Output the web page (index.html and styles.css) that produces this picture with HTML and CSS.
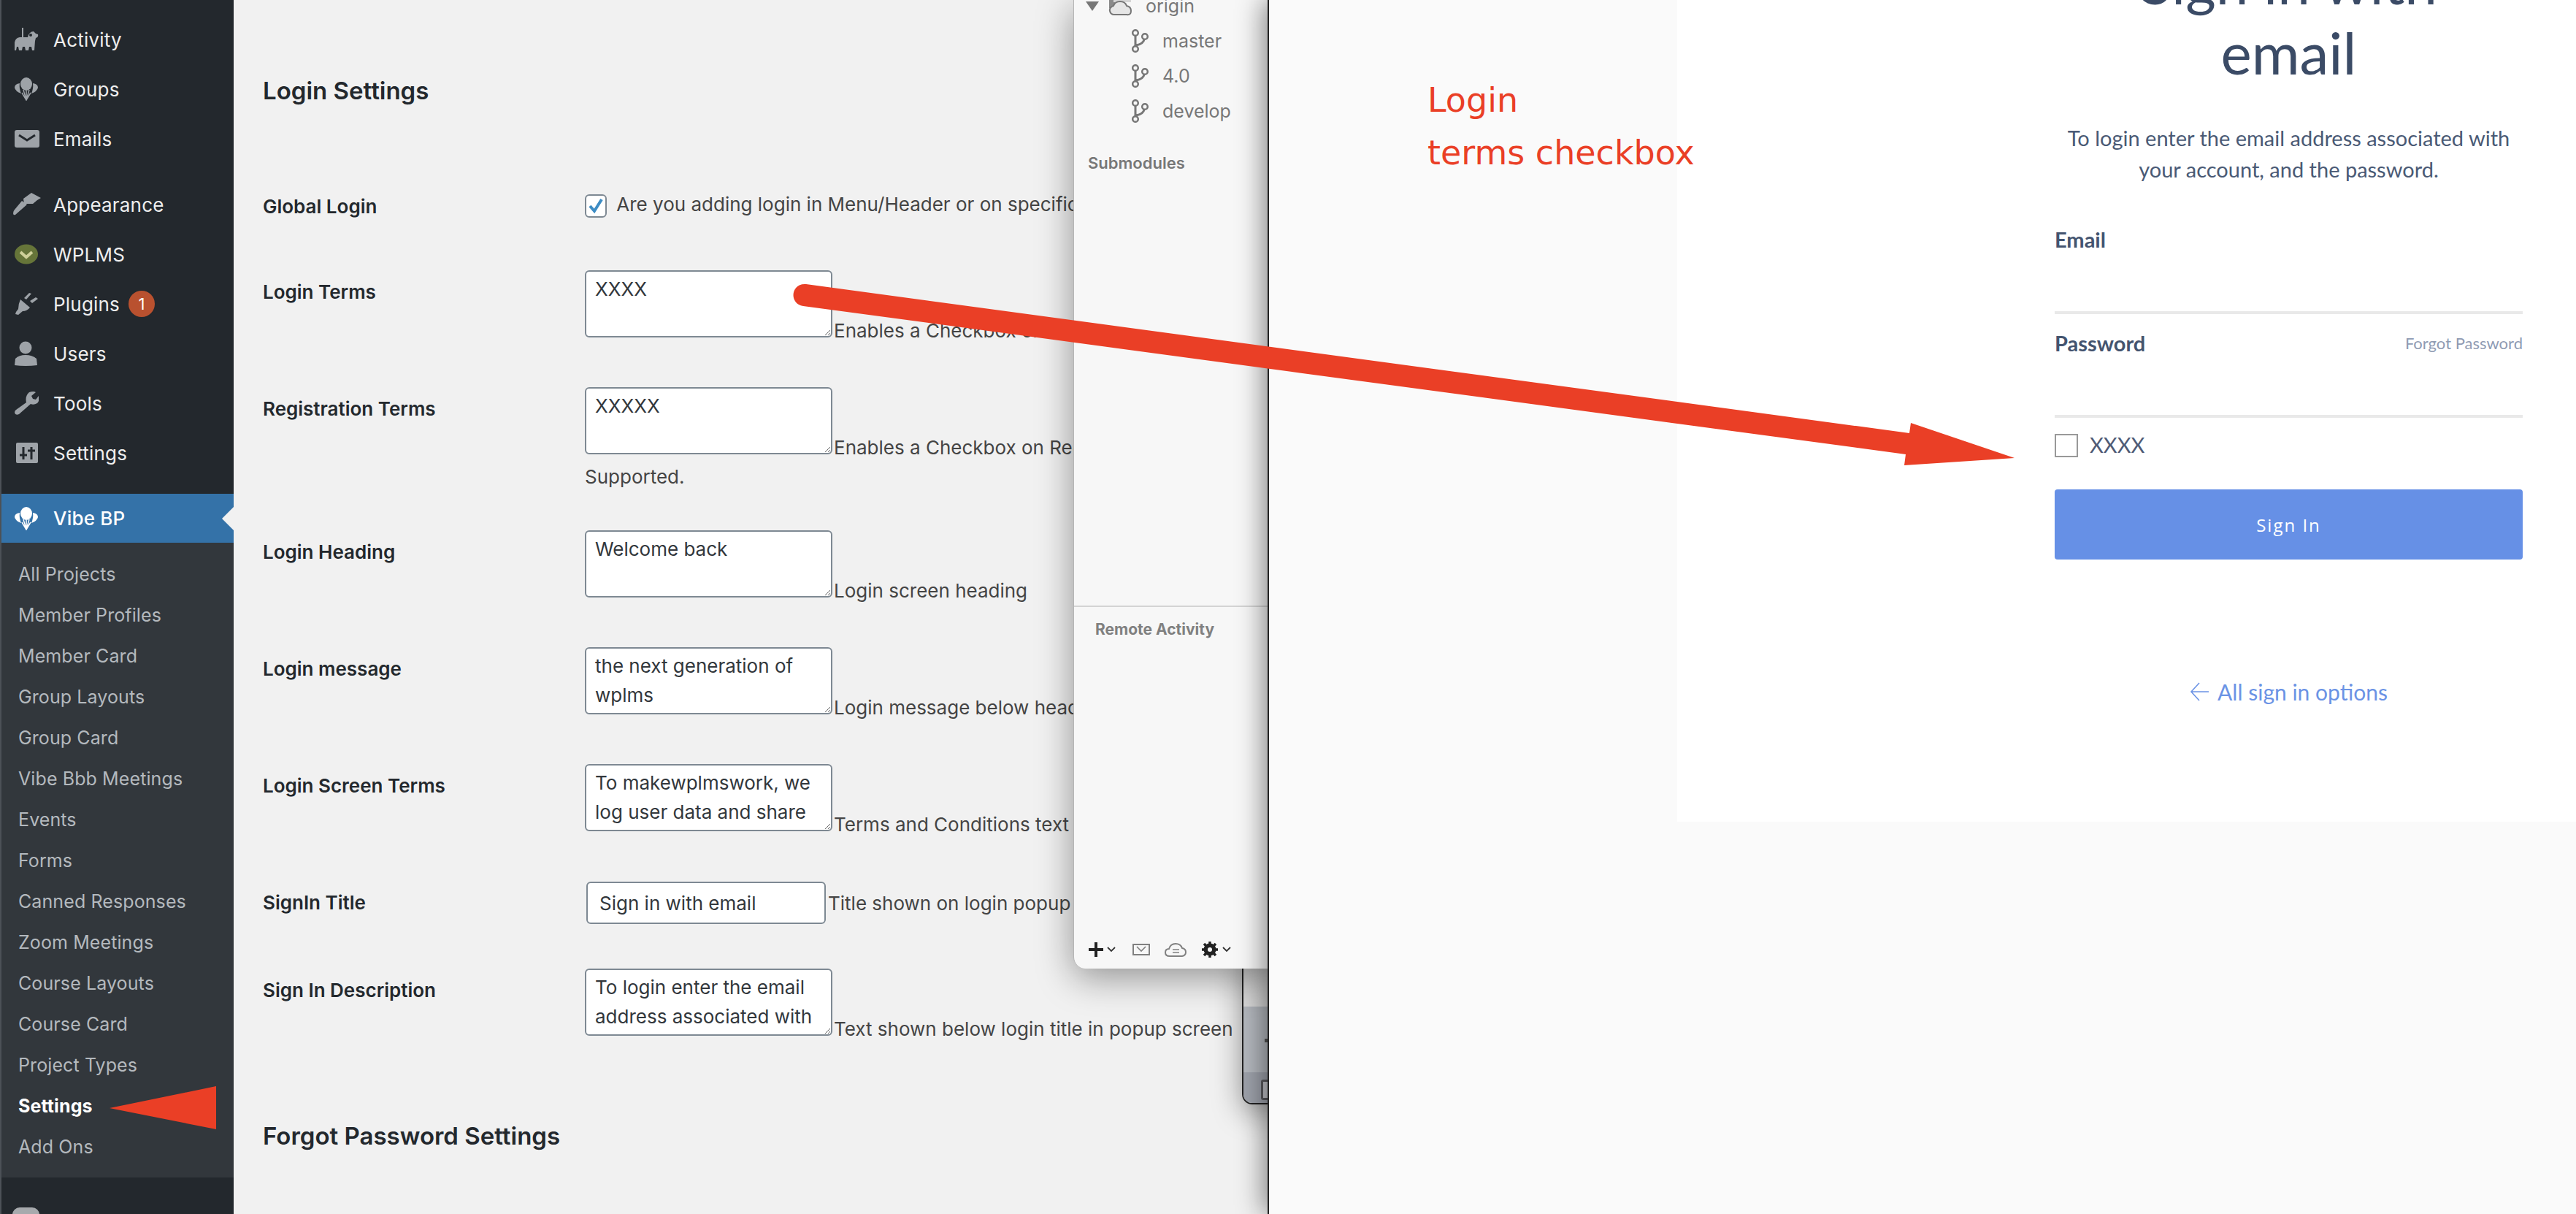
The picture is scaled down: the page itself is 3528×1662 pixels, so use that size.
FILE: index.html
```html
<!DOCTYPE html>
<html lang="en">
<head>
  <meta charset="UTF-8" />
  <title>Vibe BP Settings</title>
  <link rel="stylesheet" href="styles.css">
</head>
<body>

  <div class="admin">
    <!-- wp sidebar -->
    <aside class="sidebar">
      <ul class="menu">
        <li class="menu-item">
          <span class="menu-icon"><svg width="34" height="32" viewBox="0 0 34 32"><path class="ico" d="M10 0h2v13h6q2-8 8-8 2 3 6 4 1 4-3 5l-1 4-1 13h-3l-1-5h-3l-1 5h-4l-1-5h-3l-1 5H6l-1-5H3l-1 5H0V20q1-6 7-7h3z"/><circle class="ico-cut" cx="22" cy="10" r="2"/></svg></span>
          Activity
        </li>
        <li class="menu-item">
          <span class="menu-icon"><svg width="34" height="32" viewBox="0 0 34 32"><g class="ico"><ellipse cx="16" cy="9" rx="8" ry="9"/><path d="M7 8Q0 9 0 14q1 5 9 8-3-7-2-14zM25 8q7 1 7 6-1 5-9 8 3-7 2-14z"/></g><path class="ico-line" d="M16 18v13M10 21l6 10 6-10M12 17l4 14 4-14"/></svg></span>
          Groups
        </li>
        <li class="menu-item menu-gap">
          <span class="menu-icon"><svg width="34" height="24" viewBox="0 0 34 24"><rect class="ico" width="34" height="24" rx="3"/><path class="ico-cut-line" d="M6 7l11 7 11-7"/></svg></span>
          Emails
        </li>
        <li class="menu-item">
          <span class="menu-icon"><svg width="38" height="32" viewBox="0 0 38 32" class="shift-left"><path class="ico" d="M14 8l11-8 13 7-5 3-6 5-12 0zM12 11l7 5-16 14q-3 1-3-2t2-5z"/></svg></span>
          Appearance
        </li>
        <li class="menu-item">
          <span class="menu-icon"><svg width="33" height="28" viewBox="0 0 33 28"><ellipse cx="16" cy="14" rx="16" ry="13.5" fill="#667539"/><path d="M8 11l8 7 8-7" fill="none" stroke="#cfd099" stroke-width="4"/></svg></span>
          WPLMS
        </li>
        <li class="menu-item">
          <span class="menu-icon"><svg width="32" height="32" viewBox="0 0 32 32"><path class="ico" d="M8 10l13 11q-4 5-10 5l-6 5-4-1 1-3 3-4q0-7 3-13zM13 8l7-7 3 1-7 8zM21 12l8-5 3 2-8 6z"/></svg></span>
          Plugins <span class="badge">1</span>
        </li>
        <li class="menu-item">
          <span class="menu-icon"><svg width="32" height="34" viewBox="0 0 32 34"><circle class="ico" cx="15" cy="9" r="8.5"/><path class="ico" d="M1 24q5-5 14-5t15 5l1 9q-8 1-16 1t-15-1z"/></svg></span>
          Users
        </li>
        <li class="menu-item">
          <span class="menu-icon"><svg width="33" height="32" viewBox="0 0 33 32"><path class="ico" d="M20 1q6-2 9 0l-6 5 2 4 4 1 4-5q2 6-2 10-5 3-9 1L6 31q-5 2-6-2 0-3 2-4l14-10q-2-9 4-14z"/></svg></span>
          Tools
        </li>
        <li class="menu-item menu-gap">
          <span class="menu-icon"><svg width="32" height="28" viewBox="0 0 32 28" class="shift-right"><rect class="ico" width="30" height="28" rx="2"/><path class="ico-cut-line" d="M10 6v17M5 17h10M21 6v17M16 11h10"/></svg></span>
          Settings
        </li>
        <li class="menu-item menu-current">
          <span class="menu-icon"><svg width="34" height="32" viewBox="0 0 34 32"><g fill="#fff"><ellipse cx="16" cy="9" rx="8" ry="9"/><path d="M7 8Q0 9 0 14q1 5 9 8-3-7-2-14zM25 8q7 1 7 6-1 5-9 8 3-7 2-14z"/></g><path class="ico-line-white" d="M16 18v13M10 21l6 10 6-10M12 17l4 14 4-14"/></svg></span>
          Vibe BP
        </li>
      </ul>
      <ul class="submenu">
        <li>All Projects</li>
        <li>Member Profiles</li>
        <li>Member Card</li>
        <li>Group Layouts</li>
        <li>Group Card</li>
        <li>Vibe Bbb Meetings</li>
        <li>Events</li>
        <li>Forms</li>
        <li>Canned Responses</li>
        <li>Zoom Meetings</li>
        <li>Course Layouts</li>
        <li>Course Card</li>
        <li>Project Types</li>
        <li class="submenu-current">Settings</li>
        <li>Add Ons</li>
      </ul>
      <div class="menu-item menu-last">
        <span class="app-icon"></span>
        FrontON
      </div>
    </aside>

    <!-- settings form -->
    <main class="content">
      <h2 class="section-title">Login Settings</h2>

      <div class="row row-check">
        <div class="row-label">Global Login</div>
        <div class="row-field">
          <span class="check"><svg width="22" height="22" viewBox="0 0 22 22"><path d="M3 11l6 7L19 2" fill="none" stroke="#3d8cc4" stroke-width="4"/></svg></span>
          Are you adding login in Menu/Header or on specific pages?
        </div>
      </div>

      <div class="row">
        <div class="row-label">Login Terms</div>
        <div class="row-field"><textarea class="field-area">XXXX</textarea>Enables a Checkbox on Login screen</div>
      </div>

      <div class="row row-tall">
        <div class="row-label">Registration Terms</div>
        <div class="row-field"><textarea class="field-area">XXXXX</textarea>Enables a Checkbox on Registration screen<br>Supported.</div>
      </div>

      <div class="row">
        <div class="row-label">Login Heading</div>
        <div class="row-field"><textarea class="field-area">Welcome back</textarea>Login screen heading</div>
      </div>

      <div class="row">
        <div class="row-label">Login message</div>
        <div class="row-field"><textarea class="field-area">the next generation of wplms</textarea>Login message below heading</div>
      </div>

      <div class="row">
        <div class="row-label">Login Screen Terms</div>
        <div class="row-field"><textarea class="field-area">To makewplmswork, we log user data and share it with service providers.</textarea>Terms and Conditions text</div>
      </div>

      <div class="row row-short">
        <div class="row-label">SignIn Title</div>
        <div class="row-field"><input class="field-input" type="text" value="Sign in with email">Title shown on login popup screen</div>
      </div>

      <div class="row row-short">
        <div class="row-label">Sign In Description</div>
        <div class="row-field"><textarea class="field-area">To login enter the email address associated with your account, and the password.</textarea>Text shown below login title in popup screen</div>
      </div>

      <h2 class="section-title section-next">Forgot Password Settings</h2>
    </main>
  </div>

  <!-- window stacked behind the git panel -->
  <div class="back-window">
    <div class="back-top"></div>
    <div class="back-mid"><span class="back-dash"></span></div>
    <div class="back-foot"><span class="back-icon"></span></div>
  </div>

  <!-- sourcetree style sidebar -->
  <section class="git-panel">
    <div class="git-list">
      <div class="git-row git-origin">
        <span class="git-caret"></span>
        <svg width="34" height="30" viewBox="0 0 34 30"><path d="M2 0h8v18H2z" fill="#8a8a8a"/><path d="M8 0h24v10H8z" fill="#d5d5d5"/><path d="M9 27q-5 0-6-5t5-7q2-6 9-6t9 6q6 1 6 7t-6 5z" fill="#e6e6e6" stroke="#777" stroke-width="2"/></svg>
        origin
      </div>
      <div class="git-row git-branch">
        <svg class="branch-icon" width="24" height="32" viewBox="0 0 24 32"><g fill="none" stroke="#777" stroke-width="2.5"><circle cx="5" cy="5" r="3.8"/><circle cx="5" cy="27" r="3.8"/><circle cx="18" cy="10" r="3.8"/><path d="M5 9v14M6 22q10-2 11-8" stroke-width="3"/></g></svg>
        master
      </div>
      <div class="git-row git-branch">
        <svg class="branch-icon" width="24" height="32" viewBox="0 0 24 32"><g fill="none" stroke="#777" stroke-width="2.5"><circle cx="5" cy="5" r="3.8"/><circle cx="5" cy="27" r="3.8"/><circle cx="18" cy="10" r="3.8"/><path d="M5 9v14M6 22q10-2 11-8" stroke-width="3"/></g></svg>
        4.0
      </div>
      <div class="git-row git-branch">
        <svg class="branch-icon" width="24" height="32" viewBox="0 0 24 32"><g fill="none" stroke="#777" stroke-width="2.5"><circle cx="5" cy="5" r="3.8"/><circle cx="5" cy="27" r="3.8"/><circle cx="18" cy="10" r="3.8"/><path d="M5 9v14M6 22q10-2 11-8" stroke-width="3"/></g></svg>
        develop
      </div>
      <div class="git-title">Submodules</div>
    </div>
    <div class="git-remote">Remote Activity</div>
    <div class="git-tools">
      <svg width="40" height="20" viewBox="0 0 40 20"><path d="M10 0v20M0 10h20" stroke="#222" stroke-width="4"/><path d="M26 7l5 5 5-5" fill="none" stroke="#333" stroke-width="1.8"/></svg>
      <svg width="24" height="17" viewBox="0 0 24 17"><rect x="1" y="1" width="22" height="14" fill="none" stroke="#808080" stroke-width="2"/><path d="M6 4l6 6 6-6" fill="none" stroke="#808080" stroke-width="1.6"/></svg>
      <svg width="30" height="20" viewBox="0 0 30 20"><path d="M7 19q-6 0-6-5t5-5q2-7 9-7t9 6q5 1 5 5.5T24 19z" fill="none" stroke="#808080" stroke-width="2"/><path d="M11 10h9M11 14h9" stroke="#808080" stroke-width="1.6"/></svg>
      <svg width="44" height="22" viewBox="0 0 44 22"><circle cx="12" cy="11" r="6" fill="none" stroke="#222" stroke-width="5"/><path d="M12 0v22M1 11h22M4 3l16 16M20 3L4 19" stroke="#222" stroke-width="3.5"/><circle cx="12" cy="11" r="3" fill="#f7f7f7"/><path d="M30 8l5 5 5-5" fill="none" stroke="#333" stroke-width="1.8"/></svg>
    </div>
  </section>

  <!-- login popup preview -->
  <section class="login-window">
    <div class="login-card">
      <h1 class="login-title">Sign in with email</h1>
      <p class="login-desc">To login enter the email address associated with your account, and the password.</p>
      <label class="login-label login-email">Email</label>
      <input class="login-input" type="text">
      <div class="login-label login-password"><span>Password</span><span class="login-forgot">Forgot Password</span></div>
      <input class="login-input" type="password">
      <label class="login-terms"><input class="login-box" type="checkbox"><span>XXXX</span></label>
      <button class="login-btn" type="button">Sign In</button>
      <div class="login-options"><svg width="26" height="26" viewBox="0 0 26 26"><path d="M13 1L2 13l11 12M2 13h24" fill="none" stroke="#6b93e5" stroke-width="1.6"/></svg>All sign in options</div>
    </div>
  </section>

  <!-- screenshot annotations -->
  <div class="note">Login<br>terms checkbox</div>
  <svg class="marks" width="3528" height="1662" viewBox="0 0 3528 1662">
    <path d="M1104 389L2615 593L2617 579L2759 627L2608 637L2610 622L1100 419C1080 416 1083 387 1104 389Z" fill="#ea3f26"/>
    <path d="M150 1517L296 1487V1546Z" fill="#ea3f26"/>
  </svg>

</body>
</html>
```

FILE: styles.css
```css
html, body {
  margin: 0;
  height: 1662px;
  overflow: hidden;
}
body {
  position: relative;
  font-family: "Inter", "Liberation Sans", sans-serif;
  font-size: 28px;
  background: #f1f1f1;
  color: #444;
}
ul {
  list-style: none;
  margin: 0;
  padding: 0;
}

.admin {
  display: flex;
  height: 1662px;
}

/* sidebar */
.sidebar {
  width: 318px;
  flex: none;
  border-left: 2px solid #4c5157;
  background: #23282d;
  color: #eee;
  overflow: hidden;
}
.menu {
  padding-top: 20px;
}
.menu-item {
  display: flex;
  align-items: center;
  height: 68px;
  font-size: 26px;
  letter-spacing: 0.2px;
}
.menu-gap {
  margin-bottom: 22px;
}
.menu-icon {
  display: flex;
  width: 53px;
  margin-left: 18px;
  flex: none;
}
.shift-left {
  margin-left: -2px;
}
.shift-right {
  margin-left: 2px;
}
.ico {
  fill: #9ea3a8;
}
.ico-cut {
  fill: #23282d;
}
.ico-cut-line {
  fill: none;
  stroke: #23282d;
  stroke-width: 3;
}
.ico-line {
  fill: none;
  stroke: #9ea3a8;
  stroke-width: 1.5;
}
.ico-line-white {
  fill: none;
  stroke: #fff;
  stroke-width: 1.5;
}
.badge {
  width: 36px;
  height: 36px;
  margin-left: 12px;
  border-radius: 50%;
  background: #b9512f;
  color: #fff;
  font-size: 22px;
  line-height: 36px;
  text-align: center;
}
.menu-current {
  position: relative;
  height: 67px;
  background: #3472a8;
  color: #fff;
  font-weight: 500;
}
.menu-current::after {
  content: "";
  position: absolute;
  right: 0;
  top: 18px;
  border: 16px solid transparent;
  border-left: 0;
  border-right-color: #f1f1f1;
}
.submenu {
  padding: 15px 0 14px;
  background: #32373c;
  color: #b4b9be;
  font-size: 25px;
  letter-spacing: 0.1px;
}
.submenu li {
  height: 56px;
  line-height: 56px;
  padding-left: 23px;
}
.submenu-current {
  color: #fff;
  font-weight: 700;
}
.menu-last {
  margin-top: 25px;
  color: #fff;
}
.app-icon {
  width: 37px;
  height: 36px;
  margin: 0 58px 0 15px;
  border-radius: 10px;
  background: #a7aaad;
}

/* settings */
.content {
  flex: 1;
  min-width: 0;
  padding-left: 40px;
  white-space: nowrap;
  overflow: hidden;
}
.section-title {
  margin: 104px 0 114px;
  color: #23282d;
  font-size: 33px;
  font-weight: 600;
  line-height: 40px;
}
.section-next {
  margin: 89px 0 0;
}
.row {
  display: flex;
  height: 160px;
  line-height: 40px;
}
.row-check {
  height: 112px;
}
.row-tall {
  height: 196px;
}
.row-short {
  height: 120px;
}
.row-label {
  width: 441px;
  flex: none;
  padding-top: 10px;
  color: #23282d;
  font-size: 26px;
  font-weight: 600;
}
.row-check .row-label {
  padding-top: 5px;
}
.row-check .row-field {
  padding-top: 2px;
}
.row-field {
  font-size: 26px;
  color: #444;
}
.check {
  display: inline-flex;
  align-items: center;
  justify-content: center;
  box-sizing: border-box;
  width: 30px;
  height: 32px;
  margin-right: 6px;
  border: 2px solid #7e8993;
  border-radius: 6px;
  background: #fff;
  vertical-align: middle;
}
.field-area {
  box-sizing: border-box;
  width: 339px;
  height: 92px;
  margin: 0 2px 0 0;
  padding: 4px 12px;
  border: 2px solid #7e8993;
  border-radius: 6px;
  background: #fff;
  color: #32373c;
  font-family: inherit;
  font-size: 26px;
  line-height: 40px;
  overflow: hidden;
}
.field-input {
  box-sizing: border-box;
  width: 328px;
  height: 58px;
  margin: 1px 3px 0 2px;
  padding: 0 16px;
  border: 2px solid #7e8993;
  border-radius: 6px;
  background: #fff;
  color: #32373c;
  font-family: inherit;
  font-size: 26px;
}

/* windows on top of the page */
.back-window {
  position: absolute;
  left: 1701px;
  top: 1300px;
  width: 60px;
  height: 212px;
  box-sizing: border-box;
  display: flex;
  flex-direction: column;
  border: 2px solid #222;
  border-radius: 0 0 0 14px;
  overflow: hidden;
  box-shadow: 0 10px 40px rgba(0, 0, 0, 0.4);
}
.back-top {
  height: 76px;
  background: #dcdcdc;
}
.back-mid {
  position: relative;
  height: 90px;
  background: #b5b9bf;
}
.back-dash {
  position: absolute;
  left: 29px;
  top: 44px;
  width: 12px;
  height: 5px;
  background: #555;
}
.back-foot {
  flex: 1;
  position: relative;
  background: #9fa3ac;
}
.back-icon {
  position: absolute;
  left: 24px;
  top: 10px;
  width: 20px;
  height: 22px;
  border: 3px solid #5a5a5e;
  border-radius: 3px;
  background: #c4c6cb;
}

.git-panel {
  position: absolute;
  left: 1470px;
  top: 0;
  width: 280px;
  height: 1326px;
  box-sizing: border-box;
  display: flex;
  flex-direction: column;
  border-left: 1px solid #b5b5b5;
  border-radius: 0 0 0 16px;
  background: #f7f7f7;
  color: #777;
  box-shadow: 0 12px 50px rgba(0, 0, 0, 0.4);
  overflow: hidden;
}
.git-list {
  height: 847px;
  box-sizing: border-box;
  margin-top: -16px;
  padding-top: 0;
  border-bottom: 2px solid #d4d4d4;
  flex: none;
}
.git-row {
  display: flex;
  align-items: center;
  height: 48px;
  font-size: 25px;
}
.git-origin {
  padding-left: 16px;
}
.git-origin svg {
  margin: 0 18px 0 12px;
}
.git-caret {
  border: 9px solid transparent;
  border-top: 13px solid #777;
  border-bottom: 0;
}
.git-branch {
  padding-left: 79px;
}
.branch-icon {
  margin-right: 18px;
}
.git-title {
  margin: 34px 0 0 19px;
  font-size: 22px;
  font-weight: 600;
}
.git-remote {
  margin: 18px 0 0 29px;
  font-size: 21px;
  font-weight: 700;
  color: #808080;
}
.git-tools {
  display: flex;
  align-items: center;
  gap: 20px;
  margin-top: auto;
  padding: 0 0 15px 20px;
}

.login-window {
  position: absolute;
  left: 1736px;
  top: 0;
  right: 0;
  bottom: 0;
  border-left: 2px solid #222;
  background: #fafafa;
  box-shadow: -6px 0 34px rgba(0, 0, 0, 0.45);
  font-family: "Lato", "Open Sans", sans-serif;
  color: #44546f;
}
.login-card {
  box-sizing: border-box;
  height: 1125px;
  margin-left: 559px;
  padding: 0 73px 0 517px;
  background: #fff;
  overflow: hidden;
}
.login-title {
  margin: -73px 0 0;
  padding: 0 60px;
  color: #3b4b66;
  font-size: 80px;
  font-weight: 400;
  line-height: 96px;
  text-align: center;
}
.login-desc {
  margin: 48px 0 0;
  color: #4a5a75;
  font-size: 29px;
  line-height: 43px;
  text-align: center;
}
.login-label {
  display: block;
  color: #44546f;
  font-size: 29px;
  font-weight: 700;
  line-height: 40px;
}
.login-email {
  margin-top: 55px;
}
.login-password {
  display: flex;
  justify-content: space-between;
  margin-top: 20px;
}
.login-forgot {
  color: #8f9bb3;
  font-size: 22px;
  font-weight: 400;
}
.login-input {
  display: block;
  box-sizing: border-box;
  width: 100%;
  height: 82px;
  padding: 0;
  border: 0;
  border-bottom: 4px solid #e9e9e9;
  background: transparent;
}
.login-terms {
  display: flex;
  align-items: flex-end;
  gap: 16px;
  margin-top: 20px;
  color: #4f5b76;
  font-size: 29px;
  line-height: 34px;
}
.login-box {
  appearance: none;
  width: 32px;
  height: 32px;
  margin: 0;
  border: 2px solid #999;
  background: #fff;
}
.login-btn {
  display: block;
  width: 100%;
  height: 96px;
  margin-top: 44px;
  border: 0;
  border-radius: 4px;
  background: #6690e6;
  color: #fff;
  font-family: "Open Sans", sans-serif;
  font-size: 24px;
  letter-spacing: 2px;
}
.login-options {
  display: flex;
  align-items: center;
  justify-content: center;
  gap: 12px;
  margin-top: 161px;
  color: #6b93e5;
  font-size: 30px;
  line-height: 40px;
}

/* annotations */
.note {
  position: absolute;
  left: 1955px;
  top: 101px;
  color: #ea3f26;
  font-family: "DejaVu Sans", sans-serif;
  font-size: 46px;
  line-height: 72px;
}
.marks {
  position: absolute;
  left: 0;
  top: 0;
  pointer-events: none;
}
```
